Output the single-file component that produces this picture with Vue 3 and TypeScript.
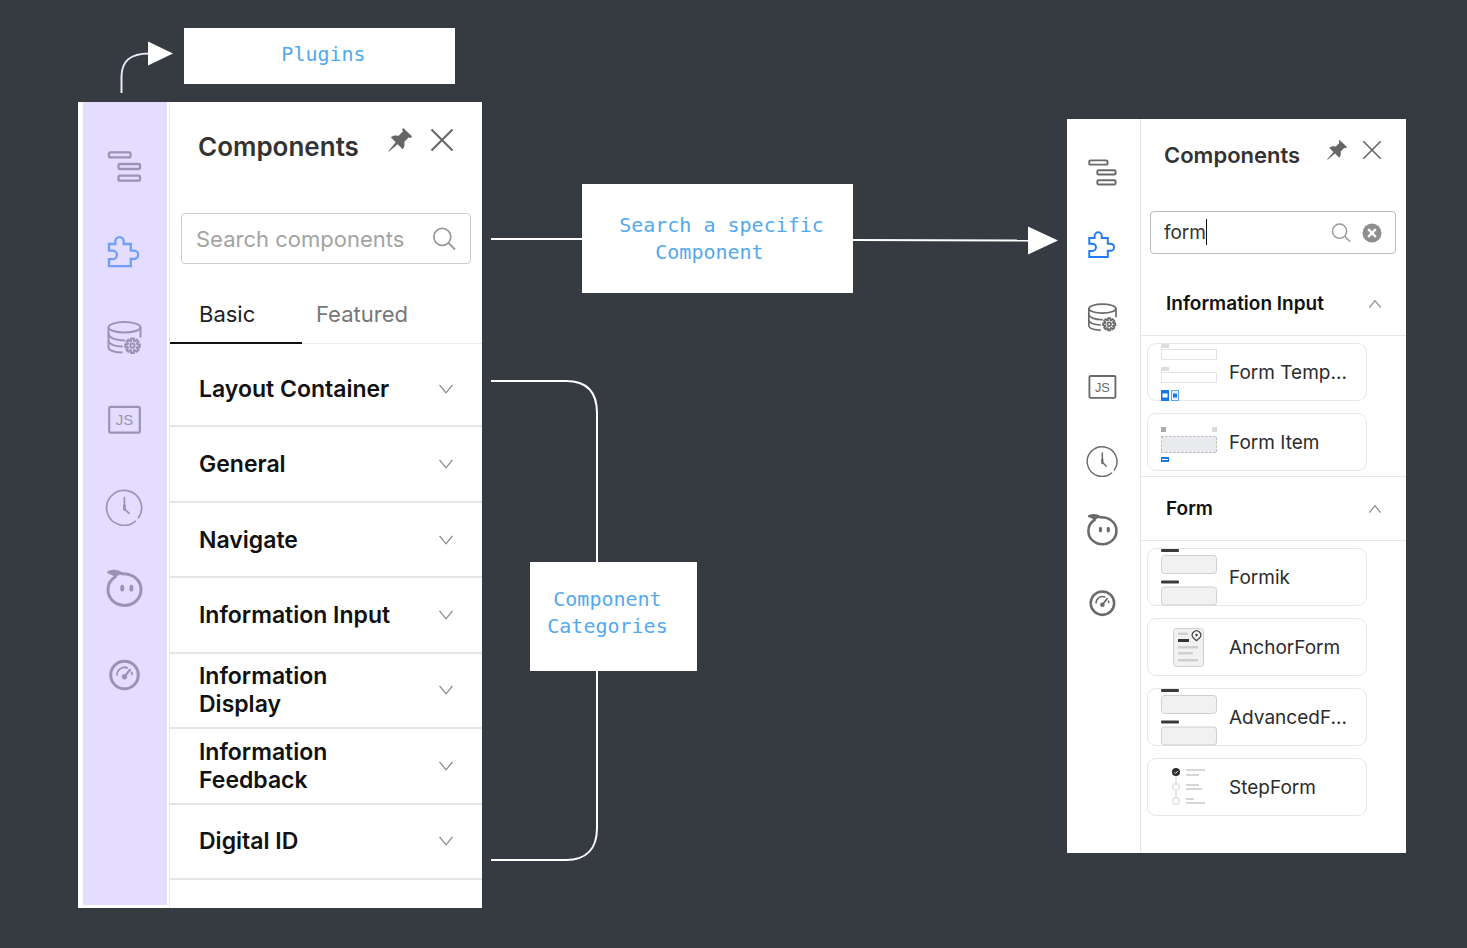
<script setup lang="ts">
import { ref } from 'vue'

interface Plugin {
  id: string
  label: string
}

interface Item {
  name: string
  art: string
}

interface Group {
  title: string
  items: Item[]
}

const plugins: Plugin[] = [
  { id: 'outline', label: 'Outline tree' },
  { id: 'puzzle', label: 'Components' },
  { id: 'data', label: 'Data source' },
  { id: 'script', label: 'Source code' },
  { id: 'clock', label: 'History' },
  { id: 'mascot', label: 'Assistant' },
  { id: 'gauge', label: 'Performance' },
]

const categories: string[] = [
  'Layout Container',
  'General',
  'Navigate',
  'Information Input',
  'Information Display',
  'Information Feedback',
  'Digital ID',
]

const groups: Group[] = [
  {
    title: 'Information Input',
    items: [
      { name: 'Form Temp...', art: 'template' },
      { name: 'Form Item', art: 'item' },
    ],
  },
  {
    title: 'Form',
    items: [
      { name: 'Formik', art: 'fields' },
      { name: 'AnchorForm', art: 'anchor' },
      { name: 'AdvancedF...', art: 'fields' },
      { name: 'StepForm', art: 'steps' },
    ],
  },
]

const emptyQuery = ref('')
const query = ref('form')

/* Outline of the eight-toothed settings wheel on the data source icon. */
function wheel(cx: number, cy: number, inner: number, outer: number): string {
  const points: string[] = []
  for (let i = 0; i < 8; i++) {
    const base = (i * Math.PI) / 4
    const corners: [number, number][] = [
      [-0.26, inner],
      [-0.2, outer],
      [0.2, outer],
      [0.26, inner],
    ]
    for (const [turn, radius] of corners) {
      const x = cx + radius * Math.cos(base + turn)
      const y = cy + radius * Math.sin(base + turn)
      points.push(`${x.toFixed(2)} ${y.toFixed(2)}`)
    }
  }
  return `M${points.join('L')}Z`
}

const wheelPath = wheel(28.5, 29.7, 5, 7.4)
</script>

<template>
  <main class="board">
    <svg class="symbols" aria-hidden="true">
      <symbol id="outline" viewBox="0 0 40 40">
        <g fill="none" stroke="currentColor" stroke-width="2.3">
          <rect x="5" y="6.3" width="21.5" height="5" rx="1.4" />
          <rect x="14.5" y="18" width="21.5" height="5" rx="1.4" />
          <rect x="14.5" y="29.7" width="21.5" height="5" rx="1.4" />
        </g>
      </symbol>
      <symbol id="puzzle" viewBox="0 0 40 40">
        <path
          d="M5 13H11.3V10.4A4.2 4.2 0 0 1 19.7 10.4V13H26.8V19.6H30A4.2 4.2 0 0 1 30 28H26.8V35.2H5V28.2H8.6A4.3 4.3 0 0 0 8.6 19.6H5Z"
          fill="none"
          stroke="currentColor"
          stroke-width="2.3"
        />
      </symbol>
      <symbol id="data" viewBox="0 0 40 40">
        <g fill="none" stroke="currentColor" stroke-width="2">
          <ellipse cx="20.5" cy="11.3" rx="16" ry="5.2" />
          <path d="M4.5 11.3V31.5C4.8 34.5 11 36.4 18.5 36.6" />
          <path d="M36.5 11.3V21.5" />
          <path d="M4.5 18.2C5.5 21.8 12 24.2 21 24.4" />
          <path d="M4.5 25C5.5 28.2 11 30.3 18.8 30.6" />
          <path :d="wheelPath" stroke-linejoin="round" />
          <circle cx="28.5" cy="29.7" r="2.1" />
        </g>
      </symbol>
      <symbol id="script" viewBox="0 0 40 40">
        <rect
          x="5.2"
          y="5.9"
          width="30.6"
          height="25.7"
          rx="1.2"
          fill="none"
          stroke="currentColor"
          stroke-width="2.2"
        />
      </symbol>
      <symbol id="clock" viewBox="0 0 40 40">
        <g fill="none" stroke="currentColor" stroke-width="1.7" stroke-linecap="round">
          <path d="M31.3 35.3A17.5 17.5 0 1 1 34.5 31.8" />
          <path d="M20.4 11.7V22.6L25 27.3" />
          <path d="M20.4 19.5V23.6" stroke-width="2.6" />
        </g>
      </symbol>
      <symbol id="mascot" viewBox="0 0 40 40" overflow="visible">
        <path
          d="M17.8 2.7C14.500 .400 9.500 -.200 4.800 1.300C8 2.200 10.600 3.600 11.400 5.800C7 8.500 4 13.300 4 18.700C4 27.600 11.200 34.400 20.500 34.400C29.700 34.400 37 27.600 37 18.600C37 9.700 29.500 2.300 17.800 2.700Z"
          fill="none"
          stroke="currentColor"
          stroke-width="3"
          stroke-linejoin="round"
        />
        <path d="M4.800 1.300C9.500 -.200 14.500 .400 17.800 2.700L11.400 5.800C10.600 3.600 8 2.200 4.800 1.300Z" fill="currentColor" />
        <ellipse cx="18.2" cy="17.2" rx="2" ry="3.4" fill="currentColor" />
        <ellipse cx="27.4" cy="17.2" rx="2" ry="3.4" fill="currentColor" />
      </symbol>
      <symbol id="gauge" viewBox="0 0 40 40">
        <g fill="none" stroke="currentColor" stroke-linecap="round">
          <circle cx="20.5" cy="19" r="13.8" stroke-width="3" />
          <path d="M13 18.8A7.7 7.7 0 0 1 23.4 11.8" stroke-width="1.8" />
          <path d="M27.6 16.4A7.7 7.7 0 0 1 28 18.4" stroke-width="1.8" />
          <path d="M20.8 20.3L26 13.8" stroke-width="2.2" />
        </g>
        <circle cx="20.5" cy="20.8" r="2.7" fill="currentColor" />
      </symbol>
      <symbol id="pin" viewBox="0 0 24 24">
        <path
          d="M15.2 0L24 8.3L22.6 10L20.6 9.5L16.2 14C17.2 16.8 16.2 19.5 14.8 21.3L9.6 16.2L.7 23.7L.2 23.2L7.7 14.3L2.8 9.3C4.8 7.7 7.8 7 10.3 8L14.8 3.5L14.1 1.4Z"
          fill="currentColor"
        />
      </symbol>
      <symbol id="cross" viewBox="0 0 24 24">
        <path d="M1.5 1.5L22.5 22.5M22.5 1.5L1.5 22.5" fill="none" stroke="currentColor" stroke-width="2" />
      </symbol>
      <symbol id="lens" viewBox="0 0 24 24">
        <g fill="none" stroke="currentColor" stroke-width="1.8">
          <circle cx="10.3" cy="9.800" r="8.5" />
          <path d="M16.5 16L23 22.500" />
        </g>
      </symbol>
      <symbol id="chevron" viewBox="0 0 16 16">
        <path d="M1.5 3.8L8 11.8L14.5 3.8" fill="none" stroke="currentColor" stroke-width="1.3" />
      </symbol>
      <symbol id="clear" viewBox="0 0 20 20">
        <circle cx="10" cy="10" r="9.5" fill="currentColor" />
        <path d="M6.2 6.2L13.8 13.8M13.8 6.2L6.2 13.8" stroke="#fff" stroke-width="2.4" />
      </symbol>

      <symbol id="art-template" viewBox="0 0 56 57">
        <g fill="#dcdddf">
          <rect width="8" height="4" />
          <rect y="23" width="8" height="4" />
        </g>
        <g fill="#fff" stroke="#e2e3e6">
          <rect x=".5" y="5.5" width="55" height="10" />
          <rect x=".5" y="28.5" width="55" height="10" />
        </g>
        <rect y="46" width="8" height="11" fill="#1478e6" />
        <rect x="1.5" y="49.5" width="5" height="4" fill="#fff" />
        <rect x="10.5" y="46.5" width="7" height="10" fill="#e6f2ff" stroke="#5ea4ee" />
        <rect x="12" y="49.5" width="4" height="4" fill="#1478e6" />
      </symbol>
      <symbol id="art-item" viewBox="0 0 56 57">
        <rect y="13" width="5" height="5" fill="#a9abb3" />
        <rect x="51" y="13" width="5" height="5" fill="#d9dadd" />
        <rect x=".5" y="22.5" width="55" height="16" fill="#e9eaee" stroke="#aaacb3" stroke-dasharray="2 2" />
        <rect y="43" width="8" height="5" fill="#1478e6" />
        <rect x="1" y="45" width="6" height="1" fill="#fff" />
      </symbol>
      <symbol id="art-fields" viewBox="0 0 56 57">
        <g fill="#3a3a3a">
          <rect y="0" width="18" height="3" rx="1" />
          <rect y="31.5" width="18" height="3" rx="1" />
        </g>
        <g fill="#f1f1f1" stroke="#cfcfcf">
          <rect x=".5" y="6.5" width="55" height="18" rx="3" />
          <rect x=".5" y="38" width="55" height="18" rx="3" />
        </g>
      </symbol>
      <symbol id="art-anchor" viewBox="0 0 56 57">
        <rect x="12.5" y="9.5" width="30" height="38" rx="3" fill="#f1f1f1" stroke="#cdcdcd" />
        <g fill="#cfcfcf">
          <rect x="17" y="13.5" width="10" height="2.5" />
          <rect x="17" y="27" width="20" height="2.5" />
          <rect x="17" y="33" width="15" height="2.5" />
          <rect x="17" y="40" width="20" height="2.5" />
        </g>
        <rect x="17" y="20" width="11" height="3" fill="#333" />
        <path d="M35.5 21.8L32.3 18.8A4.2 4.2 0 1 1 38.7 18.8Z" fill="#f6f6f6" stroke="#444" stroke-width="1.2" />
        <circle cx="35.5" cy="16" r="1.2" fill="#333" />
      </symbol>
      <symbol id="art-steps" viewBox="0 0 56 57">
        <path d="M15 14V41" stroke="#dedede" stroke-width="1.5" />
        <circle cx="15" cy="13" r="4" fill="#2e2e2e" />
        <path d="M13.2 13.2L14.6 14.5L17 11.8" fill="none" stroke="#ddd" />
        <g fill="#fff" stroke="#e0e0e0" stroke-width="1.4">
          <circle cx="15" cy="28" r="3.3" />
          <circle cx="15" cy="42" r="3.3" />
        </g>
        <g fill="#d6d6d6">
          <rect x="25" y="10" width="19" height="2" />
          <rect x="25" y="15" width="13" height="2" />
          <rect x="25" y="25" width="13" height="2" />
          <rect x="25" y="29" width="16" height="2" />
          <rect x="25" y="39" width="8" height="2" />
          <rect x="25" y="43" width="19" height="2" />
        </g>
      </symbol>
    </svg>

    <svg class="links" aria-hidden="true">
      <g fill="none" stroke="#fff" stroke-width="2">
        <path d="M121.5 93V77C121.5 61 130 53.5 149 53.5" stroke="#e9e7fa" />
        <path d="M491 239H582" />
        <path d="M852 240L1030 240.5" />
        <path d="M491 381H566C586 381 597 391 597 413V562" />
        <path d="M597 671V828C597 849 586 860 566 860H491" />
      </g>
      <g fill="#fff">
        <path d="M148 41.5L173 53.5L148 65.5Z" />
        <path d="M1028 226.5L1058 240.5L1028 254.5Z" />
      </g>
    </svg>

    <p class="note note-plugins">Plugins</p>
    <p class="note note-search">Search a specific<br />Component&nbsp;&nbsp;</p>
    <p class="note note-categories">Component&nbsp;<br />Categories&nbsp;</p>

    <section class="panel panel-browse" aria-label="Component categories">
      <nav class="rail" aria-label="Plugins">
        <button
          v-for="plugin in plugins"
          :key="plugin.id"
          type="button"
          class="rail-button"
          :class="{ active: plugin.id === 'puzzle' }"
          :aria-label="plugin.label"
        >
          <svg class="rail-icon" viewBox="0 0 40 40">
            <use :href="'#' + plugin.id" />
            <text v-if="plugin.id === 'script'" class="glyph" x="20.5" y="24.2">JS</text>
          </svg>
        </button>
      </nav>
      <div class="body">
        <header class="head">
          <h2 class="title">Components</h2>
          <button type="button" class="tool" aria-label="Pin panel"><svg><use href="#pin" /></svg></button>
          <button type="button" class="tool" aria-label="Close panel"><svg><use href="#cross" /></svg></button>
        </header>
        <div class="search">
          <input v-model="emptyQuery" class="field" type="text" placeholder="Search components" aria-label="Search components" />
          <svg class="lens"><use href="#lens" /></svg>
        </div>
        <div class="tabs" role="tablist">
          <button type="button" class="tab selected" role="tab" aria-selected="true">Basic</button>
          <button type="button" class="tab" role="tab" aria-selected="false">Featured</button>
        </div>
        <div class="categories">
          <button v-for="category in categories" :key="category" type="button" class="category">
            <span class="category-name">{{ category }}</span>
            <svg class="chevron"><use href="#chevron" /></svg>
          </button>
        </div>
      </div>
    </section>

    <section class="panel panel-results" aria-label="Search results">
      <nav class="rail" aria-label="Plugins">
        <button
          v-for="plugin in plugins"
          :key="plugin.id"
          type="button"
          class="rail-button"
          :class="{ active: plugin.id === 'puzzle' }"
          :aria-label="plugin.label"
        >
          <svg class="rail-icon" viewBox="0 0 40 40">
            <use :href="'#' + plugin.id" />
            <text v-if="plugin.id === 'script'" class="glyph" x="20.5" y="24.2">JS</text>
          </svg>
        </button>
      </nav>
      <div class="body">
        <header class="head">
          <h2 class="title">Components</h2>
          <button type="button" class="tool" aria-label="Pin panel"><svg><use href="#pin" /></svg></button>
          <button type="button" class="tool" aria-label="Close panel"><svg><use href="#cross" /></svg></button>
        </header>
        <div class="search">
          <input v-model="query" class="field" type="text" aria-label="Search components" />
          <span class="caret"></span>
          <svg class="lens"><use href="#lens" /></svg>
          <button type="button" class="clear" aria-label="Clear search"><svg><use href="#clear" /></svg></button>
        </div>
        <div v-for="group in groups" :key="group.title" class="group">
          <button type="button" class="group-head">
            <span>{{ group.title }}</span>
            <svg class="chevron up"><use href="#chevron" /></svg>
          </button>
          <ul class="cards">
            <li v-for="item in group.items" :key="item.name" class="card">
              <svg class="art"><use :href="'#art-' + item.art" /></svg>
              <span>{{ item.name }}</span>
            </li>
          </ul>
        </div>
      </div>
    </section>
  </main>
</template>

<style>
body {
  margin: 0;
  background: #363a41;
}
</style>

<style scoped>
.board {
  position: relative;
  min-height: 100vh;
  overflow: hidden;
  background: #363a41;
  font-family: Inter, 'Liberation Sans', sans-serif;
  color: #111;
}

.board * {
  box-sizing: border-box;
}

.symbols {
  position: absolute;
  width: 0;
  height: 0;
}

.links {
  position: absolute;
  inset: 0;
  width: 100%;
  height: 100%;
}

button {
  padding: 0;
  border: 0;
  background: none;
  font: inherit;
  color: inherit;
  text-align: left;
  cursor: pointer;
}

svg {
  display: block;
}

/* Callouts placed on the canvas */
.note {
  position: absolute;
  display: grid;
  place-content: center;
  margin: 0;
  background: #fff;
  color: #54a9ec;
  font: 20px/27px 'DejaVu Sans Mono', monospace;
  text-align: center;
}

.note-plugins {
  left: 184px;
  top: 28px;
  width: 271px;
  height: 56px;
  padding: 0 0 4px 8px;
}

.note-search {
  left: 582px;
  top: 184px;
  width: 271px;
  height: 109px;
  padding-left: 8px;
}

.note-categories {
  left: 530px;
  top: 562px;
  width: 167px;
  height: 109px;
  padding-bottom: 8px;
}

/* Panels */
.panel {
  position: absolute;
  display: flex;
  background: #fff;
}

.panel-browse {
  left: 78px;
  top: 102px;
  width: 404px;
  min-height: 806px;
}

.panel-results {
  left: 1067px;
  top: 119px;
  width: 339px;
  min-height: 734px;
}

.rail {
  display: flex;
  flex: none;
  flex-direction: column;
  align-items: center;
  color: #6a6a6a;
}

.rail-button.active {
  color: #1f7cf6;
}

.rail-icon {
  width: 100%;
  height: 100%;
  overflow: visible;
}

.glyph {
  fill: currentColor;
  font: 15px 'Liberation Sans', Arial, sans-serif;
  text-anchor: middle;
}

.body {
  display: flex;
  flex: 1;
  flex-direction: column;
  min-width: 0;
}

.head {
  display: flex;
  align-items: flex-start;
}

.title {
  flex: 1;
  margin: 0;
  font-weight: 600;
  color: #333;
}

.tool {
  color: #666;
}

.tool svg,
.clear svg {
  width: 100%;
  height: 100%;
}

.search {
  position: relative;
  display: flex;
  align-items: center;
  border: 1px solid #ccc;
  border-radius: 4px;
}

.field {
  flex: 1;
  min-width: 0;
  padding: 0;
  border: 0;
  outline: 0;
  background: none;
  font: inherit;
  color: #333;
}

.field::placeholder {
  color: #a3a3a3;
  opacity: 1;
}

.lens {
  flex: none;
  color: #999;
}

.chevron {
  flex: none;
  color: #888;
}

.up {
  transform: rotate(180deg);
}

/* Category browser */
.panel-browse .rail {
  width: 91px;
  gap: 45px;
  padding: 44px 2px 0 0;
  border: solid #fff;
  border-width: 0 2px 3px 5px;
  background: #e4ddff;
  box-shadow: 1px 0 0 #e9e8ee;
  color: #9c93b4;
}

.panel-browse .body {
  margin-left: 1px;
}

.panel-browse .rail-button {
  width: 40px;
  height: 40px;
}

.panel-browse .rail-button.active {
  color: #709ff5;
}

.panel-browse .head {
  gap: 18px;
  padding: 26px 28px 0;
}

.panel-browse .title {
  font-size: 26px;
  line-height: 38px;
}

.panel-browse .tool {
  width: 24px;
  height: 24px;
}

.panel-browse .search {
  height: 51px;
  margin: 47px 11px 0;
  padding: 0 14px;
  font-size: 22px;
}

.panel-browse .lens {
  width: 24px;
  height: 24px;
}

.tabs {
  display: flex;
  margin-top: 22px;
  font-size: 22px;
  line-height: 30px;
  box-shadow: inset 0 -1px 0 #e8ecec;
}

.tab {
  padding: 13px 29px;
  border-bottom: 2px solid transparent;
  color: #777;
}

.tab.selected {
  width: 132px;
  margin-right: -15px;
  border-bottom-color: #111;
  color: #222;
}

.categories {
  display: flex;
  flex: 1;
  flex-direction: column;
  padding: 8px 0 28px;
}

.category {
  display: flex;
  flex: 1;
  align-items: center;
  justify-content: space-between;
  padding: 0 28px 0 29px;
  border-bottom: 2px solid #e4e5e6;
  font-size: 23px;
  font-weight: 600;
  line-height: 28px;
}

.category-name {
  max-width: 200px;
}

.category .chevron {
  width: 16px;
  height: 16px;
}

/* Search results */
.panel-results .rail {
  width: 74px;
  gap: 38px;
  padding: 36px 3px 0 0;
  border-right: 1px solid #e6e6e8;
}

.panel-results .rail-button {
  width: 34px;
  height: 34px;
}

.panel-results .head {
  gap: 15px;
  padding: 21px 24px 0 23px;
}

.panel-results .title {
  font-size: 22px;
  line-height: 30px;
}

.panel-results .tool {
  width: 20px;
  height: 20px;
}

.panel-results .search {
  height: 43px;
  margin: 41px 10px 18px 9px;
  padding: 0 13px;
  border-color: #bbb;
  font-size: 19px;
}

.panel-results .lens {
  width: 20px;
  height: 20px;
  margin-right: 11px;
}

.clear {
  width: 20px;
  height: 20px;
  color: #8e8e8e;
}

.caret {
  position: absolute;
  left: 55px;
  top: 7px;
  width: 1px;
  height: 26px;
  background: #111;
}

.group-head {
  display: flex;
  align-items: center;
  justify-content: space-between;
  width: 100%;
  height: 64px;
  padding: 0 24px 0 25px;
  border-bottom: 1px solid #e4e6e8;
  font-size: 19px;
  font-weight: 600;
}

.group-head .chevron {
  width: 14px;
  height: 14px;
}

.cards {
  display: flex;
  flex-direction: column;
  gap: 12px;
  margin: 0;
  padding: 7px 39px 5px 6px;
  border-bottom: 1px solid #e4e6e8;
  list-style: none;
}

.group:last-child .cards {
  border-bottom: 0;
}

.card {
  display: flex;
  align-items: center;
  gap: 12px;
  height: 58px;
  padding-left: 13px;
  border: 1px solid #e6e7e9;
  border-radius: 9px;
  font-size: 19px;
  color: #2c2c2c;
  white-space: nowrap;
}

.art {
  flex: none;
  width: 56px;
  height: 57px;
}
</style>
